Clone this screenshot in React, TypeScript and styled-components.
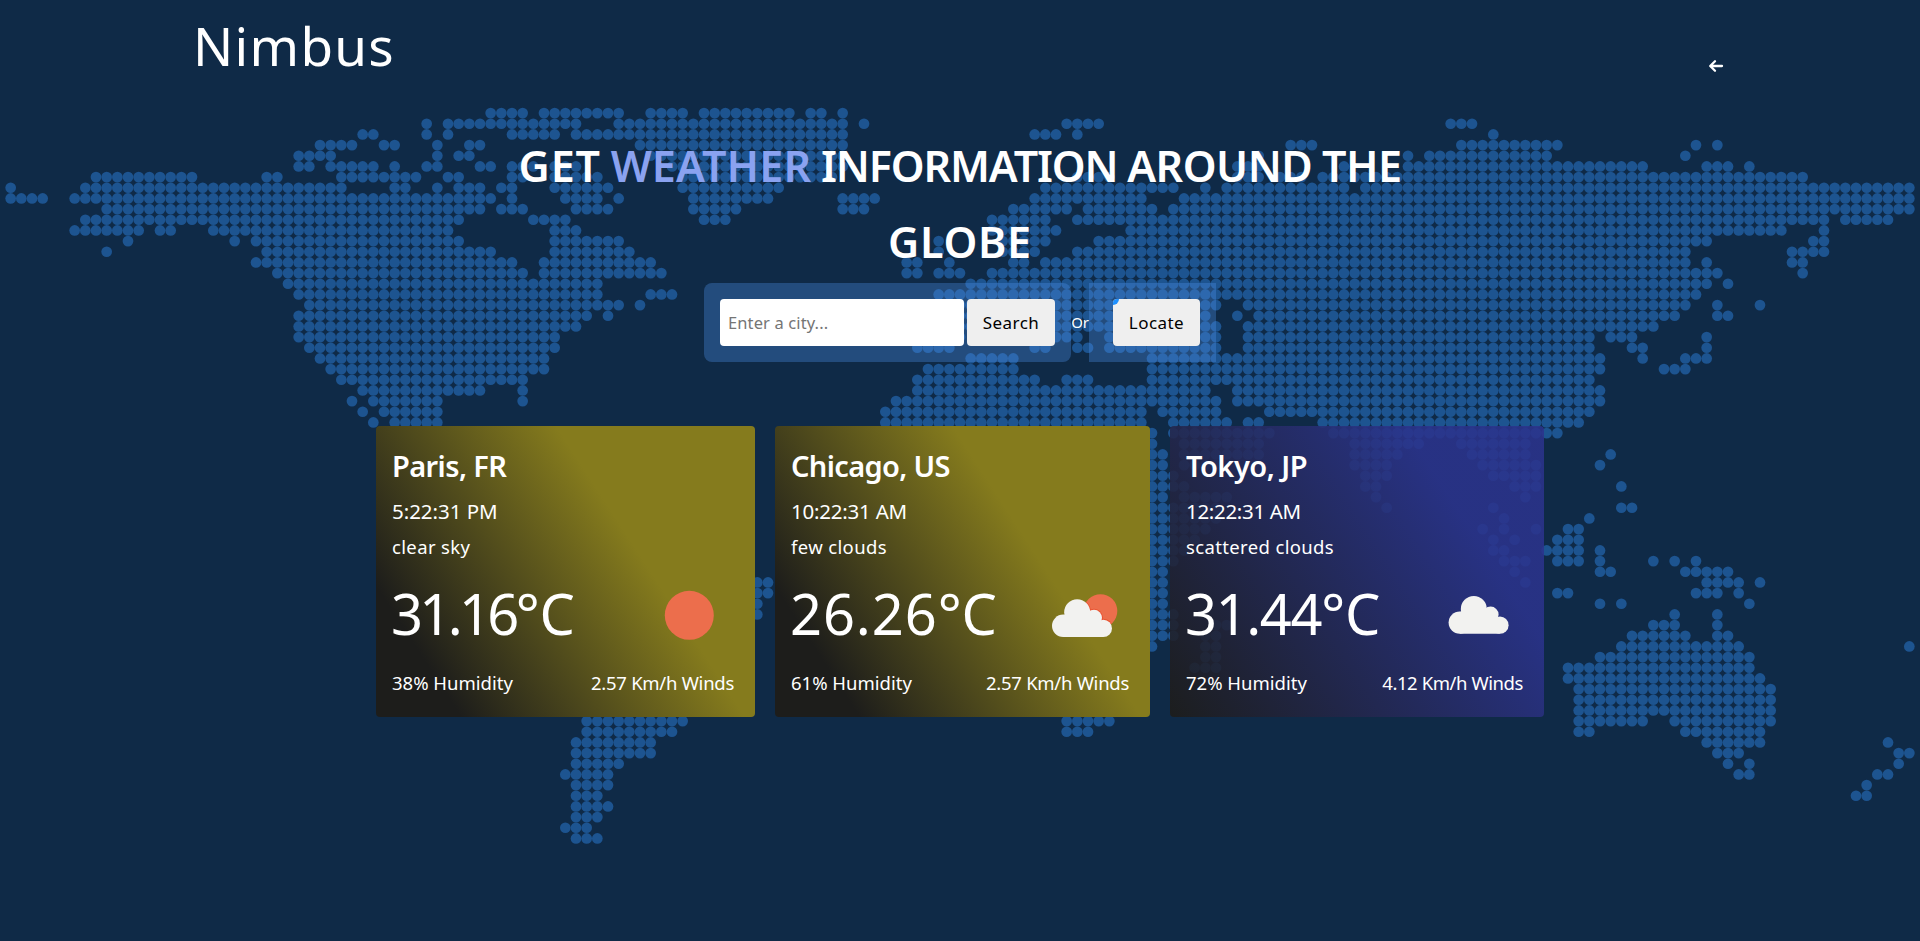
import React from 'react';
import styled, { createGlobalStyle } from 'styled-components';

const GlobalStyle = createGlobalStyle`
  *, *::before, *::after { box-sizing: border-box; }
  body {
    margin: 0;
    background: #0f2a47;
    color: #fff;
    font-family: "Noto Sans", "Open Sans", sans-serif;
    overflow: hidden;
  }
`;

const Page = styled.div`
  position: relative;
  height: 941px;
  overflow: hidden;
`;

const MapBackdrop = styled.svg`
  position: absolute;
  inset: 0;
  width: 1920px;
  height: 941px;
  fill: #1d5490;
`;

const Content = styled.div`
  position: relative;
  width: 1536px;
  margin: 0 auto;
`;

const Header = styled.header`
  display: flex;
  justify-content: space-between;
  align-items: flex-start;
  height: 91px;
`;

const Logo = styled.div`
  font-size: 53px;
  line-height: 91px;
  letter-spacing: 1.3px;
  padding-left: 1px;
`;

const BackLink = styled.a`
  display: flex;
  margin: 56px 2px 0 0;
  svg {
    width: 20px;
    height: 20px;
    fill: none;
    stroke: #fff;
    stroke-width: 2.3;
    stroke-linecap: round;
    stroke-linejoin: round;
  }
`;

const Title = styled.h1`
  width: 960px;
  margin: 36.6px auto 1.8px;
  text-align: center;
  font-size: 43px;
  font-weight: 600;
  line-height: 76.8px;
  letter-spacing: -0.51px;
  word-spacing: -1px;
`;

const Word = styled.span<{ $ls: number }>`
  letter-spacing: ${p => p.$ls}px;
`;

const Accent = styled(Word)`
  color: #8aa2f0;
`;

const SearchBar = styled.div`
  display: flex;
  justify-content: center;
  align-items: stretch;
  height: 79px;
`;

const SearchForm = styled.form`
  display: flex;
  gap: 3px;
  padding: 16px;
  border-radius: 8px;
  background: rgba(76, 144, 232, 0.34);
`;

const CityInput = styled.input`
  width: 244px;
  height: 47px;
  padding: 0 8px;
  border: 0;
  border-radius: 4px;
  background: #fff;
  font: 400 16.5px "Noto Sans", sans-serif;
  letter-spacing: 0.12px;
  &::placeholder { color: #757575; opacity: 1; }
`;

const Button = styled.button<{ $width: number }>`
  position: relative;
  overflow: hidden;
  width: ${p => p.$width}px;
  height: 47px;
  padding: 0;
  border: 0;
  border-radius: 4px;
  background: #efefef;
  color: #000;
  font: 400 17px "Noto Sans", sans-serif;
  letter-spacing: 0.45px;
`;

const LocateButton = styled(Button)`
  &::before {
    content: "";
    position: absolute;
    left: -6px;
    top: -6px;
    width: 12px;
    height: 12px;
    border-radius: 50%;
    background: #1e90ff;
  }
`;

const Or = styled.span`
  width: 18px;
  font-size: 15px;
  line-height: 78px;
  letter-spacing: -0.2px;
  text-align: center;
`;

const LocatePanel = styled.div`
  padding: 16px 16px 16px 24px;
  background: rgba(76, 144, 232, 0.34);
`;

const Cards = styled.div`
  display: grid;
  grid-template-columns: 379px 375px 374px;
  gap: 20px;
  justify-content: center;
  margin-top: 64px;
`;

const Card = styled.article<{ $night?: boolean }>`
  display: flex;
  flex-direction: column;
  height: 291px;
  padding: 16px 16px 12px;
  border-radius: 4px;
  background: ${p =>
    p.$night
      ? 'linear-gradient(57deg, rgba(30,28,24,.88) 0%, rgba(43,51,140,.88) 75%)'
      : 'linear-gradient(57deg, #1d1d1b 15%, #857b1d 65%)'};
`;

const Name = styled.h2<{ $ls: number }>`
  margin: 0;
  font-size: 29px;
  font-weight: 600;
  line-height: 47px;
  letter-spacing: ${p => p.$ls}px;
`;

const Time = styled.div<{ $ls: number }>`
  font-size: 20.5px;
  line-height: 44px;
  letter-spacing: ${p => p.$ls}px;
`;

const Conditions = styled.div`
  font-size: 18.5px;
  line-height: 28px;
  letter-spacing: 0.36px;
`;

const Reading = styled.div`
  display: flex;
  justify-content: space-between;
  margin-top: 4px;
  height: 96px;
`;

const Temperature = styled.span<{ $ls: number }>`
  font-size: 56px;
  line-height: 96px;
  letter-spacing: ${p => p.$ls}px;
  margin-left: -1px;
`;

const Unit = styled.span`
  letter-spacing: 0;
`;

const WeatherIcon = styled.svg`
  width: 100px;
  height: 96px;
`;

const Footer = styled.div`
  display: flex;
  justify-content: space-between;
  padding-right: 5px;
  font-size: 18.5px;
  line-height: 44px;
`;

const Humidity = styled.span``;

const Wind = styled.span<{ $ls: number }>`
  letter-spacing: ${p => p.$ls}px;
`;

const PITCH = 32 / 3;
const TOP = 113.1;

/* One entry per row of the dot map: the columns that hold land. */
const LAND = [
  '46-49 51-58 61-64 66-74 76-77 79',
  '40 42-54 58-79 81 100-103 136-138',
  '34-35 40 42 48-52 54-79 97-99 101 140',
  '30-33 36-37 41 44-45 60-79 121-123 137-146 159 161',
  '28-31 41 43-44 61-79 118 132 134-145 158',
  '28-29 31-35 37 40-41 45-46 48-50 52-54 63-79 116-118 126 132-154 160-162 164',
  '9-18 25-26 32-39 42-43 48-49 52-56 64-78 101-104 116-118 120-122 124-169',
  '1 8-32 37-38 41 43-45 47-48 52-57 64-73 98-110 113 115-126 128-179',
  '1-4 7-46 48 53-56 58 65-72 79-82 97-107 111-179',
  '10-45 47-49 54-57 65-69 79-81 95-100 102-108 110-179',
  '8-43 50-53 66-68 93-98 101-171 173-177',
  '7-13 15-16 20-42 52-54 93-99 106-167 171',
  '12 22 24-43 52-58 88 94-98 103-160 170-171',
  '10 25-46 52-59 88 94-97 101-158 168-171',
  '24-48 51-61 85-86 89 95-96 98-158 160 168-169',
  '26-49 51-62 85-86 88-90 93-161 169',
  '27-56 91-160 162',
  '28-56 61-63 88-159',
  '29-58 60 88-114 117-158 161 165',
  '28-55 57 88-113 116 118-157 161-162',
  '28-54 88-114 117-155',
  '28-52 86-90 95-97 99-101 104-114 117-149 151-153 160',
  '29-52 86-89 97-98 101-102 104-114 117-149 153-154 160',
  '30-51 91-95 108-150 154 158-160',
  '31-51 87-95 108-150 156-158',
  '32-49 86-97 100-102 108-115 116-149',
  '34-45 49 86-113 116-150',
  '33 35-41 49 84-114 116-150',
  '34 36-41 83-107 109-114 119-149',
  '35 37-41 83-107 110-115 117-118 124-148',
  '108 110-119 125-146',
  '108 111-118 127-133 137-143',
  '108-109 111-118 127-131 138-143 151',
  '108-109 111-114 127-130 139-144 150',
  '108-110 128-130 140-144',
  '108-111 128-129 142-144 152',
  '108-109 111-115 129 143',
  '108-114 130 140 152-153',
  '108-114 141 149',
  '108-113 139 141 144 147-148',
  '108-112 140 142 146-148',
  '108-111 140-141 145-148 150',
  '108-110 141-143 146-148 150 155 157 159',
  '108-109 142 150-151 158-162',
  '71-72 108-109 143 160-163 165',
  '71-72 108-109 146-147 159-161 163',
  '71 108-109 150 152 164',
  '71 108-110 157 161',
  '108-110 114-115 155-157 161',
  '108-110 113-114 153-158 161-162',
  '108 113-114 152-163 179',
  '113-114 150-164',
  '112-114 147-164',
  '147-165',
  '148-166',
  '148-166',
  '148-166',
  '55-64 100-104 148-154 157-166',
  '55-63 100-102 148-149 158-165',
  '54-61 160-165 177',
  '54-61 161-163 178-179',
  '54-58 162 164 178',
  '53-57 163-164 176-177',
  '54-57 175',
  '54-56 174-175',
  '54-57',
  '54-56',
  '53-55',
  '54-56',
];

const DOTS = LAND.flatMap((row, r) =>
  row.split(' ').flatMap(part => {
    const [from, to = from] = part.split('-').map(Number);
    return Array.from({ length: to - from + 1 }, (_, i) => ({
      x: (from + i) * PITCH,
      y: TOP + r * PITCH,
    }));
  }),
);

const WorldMap = () => (
  <MapBackdrop viewBox="0 0 1920 941" aria-hidden="true">
    {DOTS.map(({ x, y }) => (
      <circle key={`${x}:${y}`} cx={x} cy={y} r={5.35} />
    ))}
  </MapBackdrop>
);

const Cloud = ({ dx = 0, dy = 0 }: { dx?: number; dy?: number }) => (
  <g fill="#f2f2f0" transform={`translate(${dx} ${dy})`}>
    <circle cx="43.2" cy="47.2" r="13" />
    <circle cx="60" cy="52.8" r="8" />
    <circle cx="29.2" cy="60.8" r="11.2" />
    <circle cx="69.4" cy="63.4" r="8.6" />
    <path d="M29.2 50h26l14 8v14h-40z" />
  </g>
);

type SkyKind = 'clear' | 'few' | 'scattered';

const SkyIcon = ({ kind }: { kind: SkyKind }) => (
  <WeatherIcon viewBox="0 0 100 96">
    {kind === 'clear' && <circle cx="50.3" cy="50.3" r="24.5" fill="#ec6e4c" />}
    {kind === 'few' && (
      <>
        <clipPath id="sun-disc"><circle cx="66.5" cy="46" r="16.8" /></clipPath>
        <circle cx="66.5" cy="46" r="16.8" fill="#ec6e4c" />
        <g clipPath="url(#sun-disc)" fill="#e9512f">
          <circle cx="60" cy="52.8" r="9" />
          <circle cx="69.4" cy="63.4" r="9.6" />
          <circle cx="43.2" cy="47.2" r="13.8" />
        </g>
        <Cloud />
      </>
    )}
    {kind === 'scattered' && <Cloud dx={2.6} dy={-3.2} />}
  </WeatherIcon>
);

interface City {
  name: string;
  time: string;
  sky: string;
  temp: string;
  humidity: string;
  wind: string;
  icon: SkyKind;
  night: boolean;
  tracking: { name: number; time: number; temp: number; wind: number };
}

const CITIES: City[] = [
  {
    name: 'Paris, FR', time: '5:22:31 PM', sky: 'clear sky', temp: '31.16', humidity: '38%', wind: '2.57',
    icon: 'clear', night: false, tracking: { name: -0.6, time: -0.04, temp: -3.7, wind: -0.27 },
  },
  {
    name: 'Chicago, US', time: '10:22:31 AM', sky: 'few clouds', temp: '26.26', humidity: '61%', wind: '2.57',
    icon: 'few', night: false, tracking: { name: -0.65, time: -0.22, temp: 0.9, wind: -0.27 },
  },
  {
    name: 'Tokyo, JP', time: '12:22:31 AM', sky: 'scattered clouds', temp: '31.44', humidity: '72%', wind: '4.12',
    icon: 'scattered', night: true, tracking: { name: -0.5, time: -0.32, temp: -1.4, wind: -0.42 },
  },
];

export default function App() {
  return (
    <Page>
      <GlobalStyle />
      <WorldMap />
      <Content>
        <Header>
          <Logo>Nimbus</Logo>
          <BackLink aria-label="Back">
            <svg viewBox="0 0 20 20">
              <path d="M16 10H4.5M9 5.2L4.2 10L9 14.8" />
            </svg>
          </BackLink>
        </Header>
        <main>
          <Title>
            <Word $ls={0.9}>GET</Word> <Accent $ls={0.15}>WEATHER</Accent>{' '}
            <Word $ls={-1.1}>INFORMATION</Word> AROUND THE <Word $ls={0.75}>GLOBE</Word>
          </Title>
          <SearchBar>
            <SearchForm>
              <CityInput placeholder="Enter a city..." />
              <Button type="button" $width={88}>Search</Button>
            </SearchForm>
            <Or>Or</Or>
            <LocatePanel>
              <LocateButton type="button" $width={87}>Locate</LocateButton>
            </LocatePanel>
          </SearchBar>
          <Cards>
            {CITIES.map(city => (
              <Card key={city.name} $night={city.night}>
                <Name $ls={city.tracking.name}>{city.name}</Name>
                <Time $ls={city.tracking.time}>{city.time}</Time>
                <Conditions>{city.sky}</Conditions>
                <Reading>
                  <Temperature $ls={city.tracking.temp}>
                    {city.temp}<Unit>°C</Unit>
                  </Temperature>
                  <SkyIcon kind={city.icon} />
                </Reading>
                <Footer>
                  <Humidity>{city.humidity} Humidity</Humidity>
                  <Wind $ls={city.tracking.wind}>{city.wind} Km/h Winds</Wind>
                </Footer>
              </Card>
            ))}
          </Cards>
        </main>
      </Content>
    </Page>
  );
}
